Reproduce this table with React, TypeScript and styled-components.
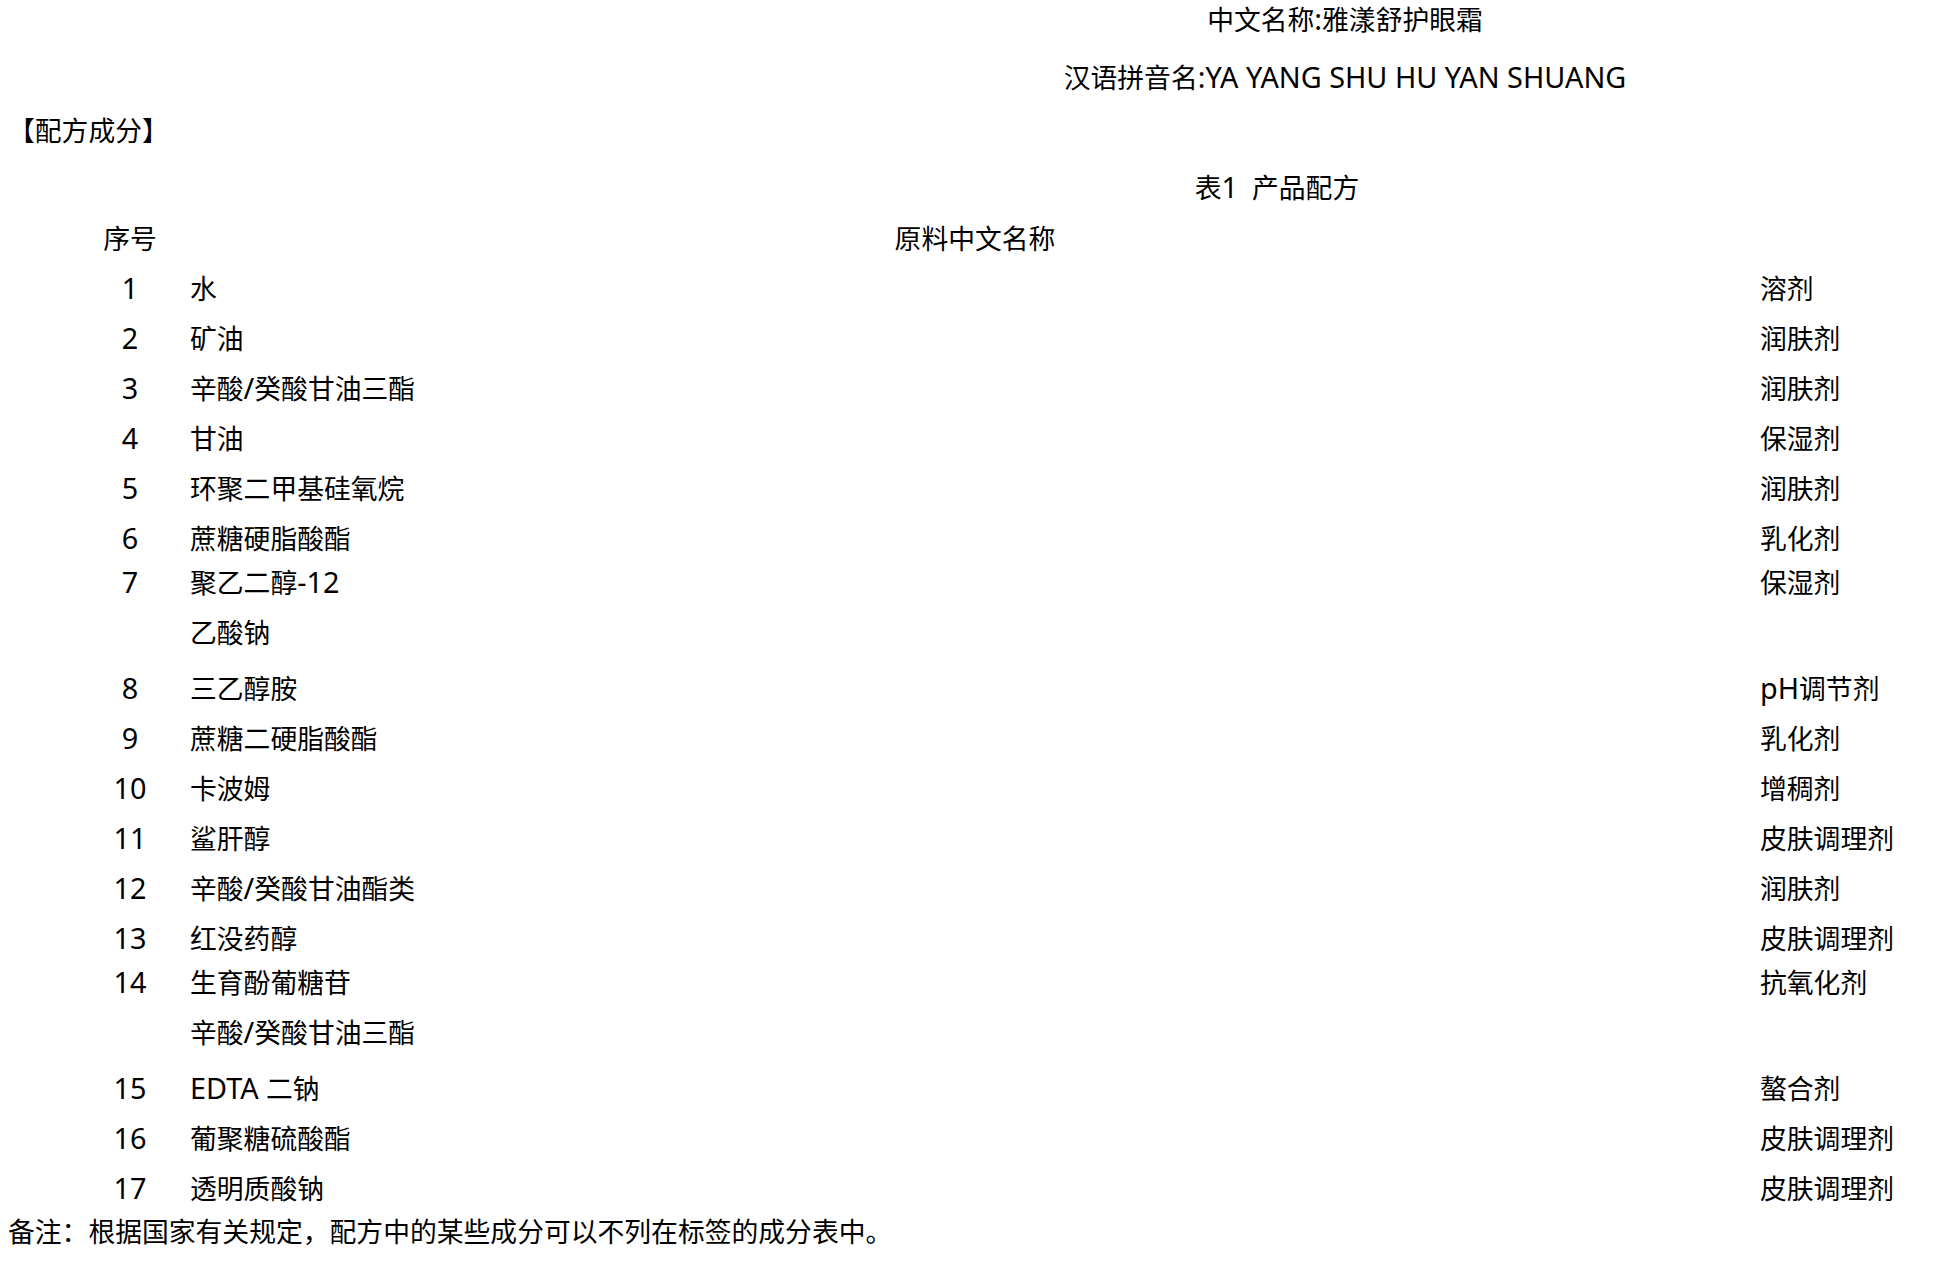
import React from 'react'
import styled, { createGlobalStyle } from 'styled-components'

const GlobalStyle = createGlobalStyle`
  html, body {
    margin: 0;
    padding: 0;
    background: #ffffff;
  }
  body {
    font-family: 'Noto Sans', 'Noto Sans CJK SC', sans-serif;
    color: #000;
  }
`

const Page = styled.div`
  width: 1950px;
  min-height: 1266px;
  padding: 0 8px;
  box-sizing: border-box;
  font-size: 26.8px;
  line-height: 50px;
  overflow: hidden;
`

// centred line; the left pad moves the centre where the document had it
const Heading = styled.div<{ pad: number; mt?: number; lh?: number }>`
  padding-left: ${({ pad }) => pad}px;
  text-align: center;
  margin-top: ${({ mt }) => mt || 0}px;
  line-height: ${({ lh }) => lh || 50}px;
  white-space: nowrap;
`

const Latin = styled.span`
  font-size: 28.8px;
  line-height: 1;
`

const Section = styled.div`
  margin-top: 3px;
`

const Table = styled.div`
  display: flex;
  flex-direction: column;
  margin-top: 1px;
`

const Row = styled.div<{ multi?: boolean }>`
  display: grid;
  grid-template-columns: 62px 120px 1570px auto;
  margin-top: ${({ multi }) => (multi ? -6 : 0)}px;
  padding-bottom: ${({ multi }) => (multi ? 6 : 0)}px;
  white-space: nowrap;
`

const Num = styled.div`
  grid-column: 2;
  text-align: center;
`

const Name = styled.div<{ head?: boolean }>`
  grid-column: 3;
  text-align: ${({ head }) => (head ? 'center' : 'left')};
`

const Role = styled.div`
  grid-column: 4;
`

const Note = styled.div`
  margin-top: -7px;
  white-space: nowrap;
`

// Latin letters and digits sit a size up from the CJK text, as in the source doc
const Txt: React.FC<{ t: string }> = ({ t }) => {
  const parts = t.split(/([A-Za-z0-9\-/:. ]+)/).filter((p) => p !== '')
  return (
    <>
      {parts.map((p, i) => (/^[A-Za-z0-9\-/:. ]+$/.test(p) ? <Latin key={i}>{p}</Latin> : <span key={i}>{p}</span>))}
    </>
  )
}

type Item = { no: number; names: string[]; role: string }

const items: Item[] = [
  { no: 1, names: ['水'], role: '溶剂' },
  { no: 2, names: ['矿油'], role: '润肤剂' },
  { no: 3, names: ['辛酸/癸酸甘油三酯'], role: '润肤剂' },
  { no: 4, names: ['甘油'], role: '保湿剂' },
  { no: 5, names: ['环聚二甲基硅氧烷'], role: '润肤剂' },
  { no: 6, names: ['蔗糖硬脂酸酯'], role: '乳化剂' },
  { no: 7, names: ['聚乙二醇-12', '乙酸钠'], role: '保湿剂' },
  { no: 8, names: ['三乙醇胺'], role: 'pH调节剂' },
  { no: 9, names: ['蔗糖二硬脂酸酯'], role: '乳化剂' },
  { no: 10, names: ['卡波姆'], role: '增稠剂' },
  { no: 11, names: ['鲨肝醇'], role: '皮肤调理剂' },
  { no: 12, names: ['辛酸/癸酸甘油酯类'], role: '润肤剂' },
  { no: 13, names: ['红没药醇'], role: '皮肤调理剂' },
  { no: 14, names: ['生育酚葡糖苷', '辛酸/癸酸甘油三酯'], role: '抗氧化剂' },
  { no: 15, names: ['EDTA 二钠'], role: '螯合剂' },
  { no: 16, names: ['葡聚糖硫酸酯'], role: '皮肤调理剂' },
  { no: 17, names: ['透明质酸钠'], role: '皮肤调理剂' },
]

const App: React.FC = () => {
  return (
    <>
      <GlobalStyle />
      <Page>
        <Heading pad={740} lh={40}>
          <Txt t="中文名称:雅漾舒护眼霜" />
        </Heading>
        <Heading pad={740} mt={13}>
          <Txt t="汉语拼音名:YA YANG SHU HU YAN SHUANG" />
        </Heading>
        <Section>【配方成分】</Section>
        <Heading pad={604} mt={7}>
          表<Latin>1</Latin>&nbsp;&nbsp;产品配方
        </Heading>
        <Table>
          <Row>
            <Num>序号</Num>
            <Name head>原料中文名称</Name>
          </Row>
          {items.map((item) => (
            <Row key={item.no} multi={item.names.length > 1}>
              <Num>
                <Latin>{item.no}</Latin>
              </Num>
              <Name>
                {item.names.map((n) => (
                  <div key={n}>
                    <Txt t={n} />
                  </div>
                ))}
              </Name>
              <Role>
                <Txt t={item.role} />
              </Role>
            </Row>
          ))}
        </Table>
        <Note>备注：根据国家有关规定，配方中的某些成分可以不列在标签的成分表中。</Note>
      </Page>
    </>
  )
}

export default App
